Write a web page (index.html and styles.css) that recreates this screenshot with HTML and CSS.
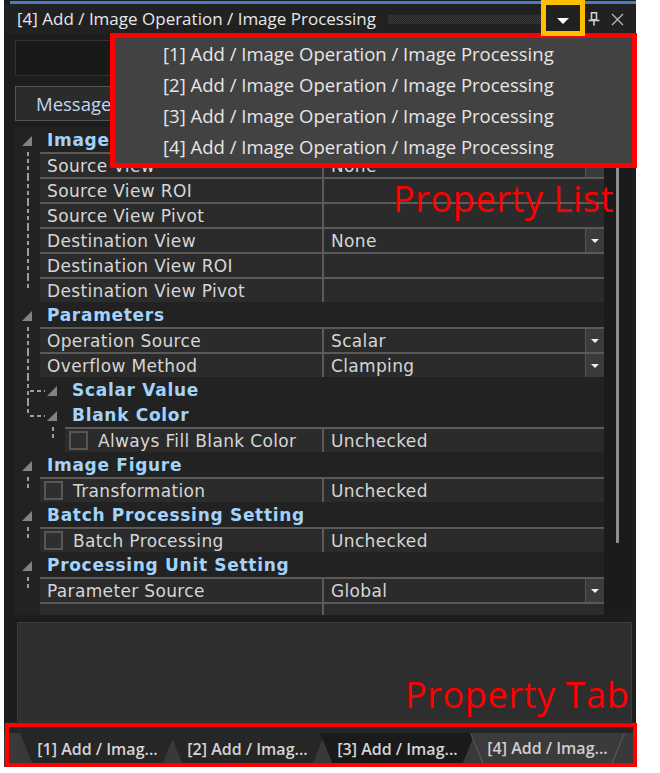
FILE: index.html
```html
<!DOCTYPE html>
<html>
<head>
<meta charset="utf-8">
<title>Property Window</title>
<link rel="stylesheet" href="styles.css">
</head>
<body>
<div class="screen">
  <div class="window">
    <div class="accent"></div>
    <div class="titlebar">
      <span class="title">[4] Add / Image Operation / Image Processing</span>
      <span class="grip"></span>
      <span class="tbtn ddbtn"><i class="wtri"></i></span>
      <span class="tbtn pin">
        <svg width="12" height="14" viewBox="0 0 12 14"><rect x="3.5" y="0.8" width="5" height="7" fill="none" stroke="#cfcfcf" stroke-width="1.6"/><line x1="0.5" y1="8.5" x2="11.5" y2="8.5" stroke="#cfcfcf" stroke-width="1.6"/><line x1="6" y1="8.5" x2="6" y2="13.5" stroke="#cfcfcf" stroke-width="1.6"/></svg>
      </span>
      <span class="tbtn close">
        <svg width="13" height="13" viewBox="0 0 13 13"><path d="M1 1 L12 12 M12 1 L1 12" stroke="#b4b4b4" stroke-width="1.4" fill="none"/></svg>
      </span>
    </div>
    <div class="content">
      <div class="search"></div>
      <div class="toolbar"><div class="msgbtn">Message</div></div>
      <div class="gridwrap">
        <div class="grid">
          <div class="row cat"><span class="gut"><i class="tri"></i></span><span class="clabel">Image View</span></div>
          <div class="row"><span class="gut line"></span><div class="cells"><span class="name">Source View</span><span class="val">None<i class="dd"></i></span></div></div>
          <div class="row"><span class="gut line"></span><div class="cells"><span class="name">Source View ROI</span><span class="val"></span></div></div>
          <div class="row"><span class="gut line"></span><div class="cells"><span class="name">Source View Pivot</span><span class="val"></span></div></div>
          <div class="row"><span class="gut line"></span><div class="cells"><span class="name">Destination View</span><span class="val">None<i class="dd"></i></span></div></div>
          <div class="row"><span class="gut line"></span><div class="cells"><span class="name">Destination View ROI</span><span class="val"></span></div></div>
          <div class="row"><span class="gut half"></span><div class="cells"><span class="name">Destination View Pivot</span><span class="val"></span></div></div>
          <div class="row cat"><span class="gut"><i class="tri"></i></span><span class="clabel">Parameters</span></div>
          <div class="row"><span class="gut line"></span><div class="cells"><span class="name">Operation Source</span><span class="val">Scalar<i class="dd"></i></span></div></div>
          <div class="row"><span class="gut line"></span><div class="cells"><span class="name">Overflow Method</span><span class="val">Clamping<i class="dd"></i></span></div></div>
          <div class="row cat"><span class="gut sub tee"></span><i class="tri subtri"></i><span class="slabel">Scalar Value</span></div>
          <div class="row cat"><span class="gut sub elbow"></span><i class="tri subtri"></i><span class="slabel">Blank Color</span></div>
          <div class="row"><span class="gut deep"></span><div class="cells"><span class="name"><i class="cb"></i>Always Fill Blank Color</span><span class="val">Unchecked</span></div></div>
          <div class="row cat"><span class="gut"><i class="tri"></i></span><span class="clabel">Image Figure</span></div>
          <div class="row"><span class="gut half"></span><div class="cells"><span class="name"><i class="cb"></i>Transformation</span><span class="val">Unchecked</span></div></div>
          <div class="row cat"><span class="gut"><i class="tri"></i></span><span class="clabel">Batch Processing Setting</span></div>
          <div class="row"><span class="gut half"></span><div class="cells"><span class="name"><i class="cb"></i>Batch Processing</span><span class="val">Unchecked</span></div></div>
          <div class="row cat"><span class="gut"><i class="tri"></i></span><span class="clabel">Processing Unit Setting</span></div>
          <div class="row"><span class="gut half"></span><div class="cells"><span class="name">Parameter Source</span><span class="val">Global<i class="dd"></i></span></div></div>
          <div class="row stub"><span class="gut"></span><div class="cells"><span class="name"></span><span class="val"></span></div></div>
        </div>
        <div class="scroll"><div class="thumb"></div></div>
      </div>
      <div class="desc"></div>
    </div>
    <div class="tabs">
      <div class="tab">[1] Add / Imag...</div>
      <div class="tab">[2] Add / Imag...</div>
      <div class="tab hover">[3] Add / Imag...</div>
      <div class="tab active"><div class="tab-in">[4] Add / Imag...</div></div>
    </div>
  </div>
</div>

<div class="menu">
  <div class="item">[1] Add / Image Operation / Image Processing</div>
  <div class="item">[2] Add / Image Operation / Image Processing</div>
  <div class="item">[3] Add / Image Operation / Image Processing</div>
  <div class="item">[4] Add / Image Operation / Image Processing</div>
</div>
<div class="hl-orange"></div>
<div class="hl-tabs"></div>
<div class="note note-list">Property List</div>
<div class="note note-tab">Property Tab</div>
</body>
</html>
```

FILE: styles.css
```css
* { box-sizing: border-box; margin: 0; padding: 0; }
html, body { width: 660px; height: 773px; background: #ffffff; overflow: hidden; }
body { position: relative; font-family: "DejaVu Sans", sans-serif; }

.screen { display: flex; height: 767px; padding-left: 4px; background: #ffffff; }
.window { width: 632px; height: 767px; display: flex; flex-direction: column; background: #1d1d1d; }

.accent { height: 3px; margin: 1px 0 0 6px; background: #4b7cc8; flex: none; }

.titlebar {
  flex: none; height: 30px; display: flex; align-items: center;
  padding: 0 4px 0 13px; background: #212121;
  font-family: "Open Sans", sans-serif; font-size: 17px; line-height: 30px; color: #e8e8e8;
}
.title { flex: none; white-space: nowrap; }
.grip {
  flex: 1; height: 9px; margin: 0 0 0 12px;
  background: conic-gradient(#3d3d3d 25%, transparent 0 50%, #3d3d3d 0 75%, transparent 0) 0 0 / 2px 2px;
}
.tbtn { flex: none; height: 30px; display: flex; align-items: center; justify-content: center; }
.ddbtn { width: 44px; }
.wtri { display: block; width: 0; height: 0; margin-top: 4px; border-style: solid; border-width: 6px 6px 0 6px; border-color: #ffffff transparent transparent transparent; }
.pin { width: 18px; }
.close { width: 29px; }

.content { flex: none; height: 688px; display: flex; flex-direction: column; padding: 6px 4px 0 11px; }
.search { flex: none; height: 36px; background: #191919; border: 1px solid #333333; }
.toolbar { flex: none; height: 35px; margin-top: 10px; display: flex; }
.msgbtn {
  width: 160px; height: 35px; border: 1px solid #555555; background: #2b2b2b;
  padding-left: 20px; font-family: "Open Sans", sans-serif; font-size: 18.5px; line-height: 33px; color: #c3d6ec;
}

.gridwrap { flex: none; height: 488px; margin-top: 6px; display: flex; overflow: hidden; }
.grid { width: 589px; flex: none; background: #222222; overflow: hidden; }
.scroll { flex: 1; background: #1b1b1b; }
.thumb { width: 3px; height: 408px; margin: 8px 0 0 12px; background: #8e8e8e; }

.row { display: flex; height: 25px; align-items: stretch; }
.row.stub { height: 13px; }
.cat { background: #222222; align-items: center; }
.gut { flex: none; width: 25px; display: flex; align-items: center; padding-left: 7px; }
.gut.line { background: repeating-linear-gradient(#9c9c9c 0 4px, transparent 4px 7px) 12px 0 / 2px 100% no-repeat; }
.gut.half { background: repeating-linear-gradient(#9c9c9c 0 4px, transparent 4px 7px) 12px 0 / 2px 13px no-repeat; }
.gut.deep { width: 50px; background: repeating-linear-gradient(#9c9c9c 0 4px, transparent 4px 7px) 37px 0 / 2px 13px no-repeat; }
.gut.sub { width: 32px; align-self: stretch; }
.gut.tee {
  background:
    repeating-linear-gradient(#9c9c9c 0 4px, transparent 4px 7px) 12px 0 / 2px 100% no-repeat,
    repeating-linear-gradient(90deg, #9c9c9c 0 4px, transparent 4px 7px) 15px 13px / 15px 2px no-repeat;
}
.gut.elbow {
  background:
    repeating-linear-gradient(#9c9c9c 0 4px, transparent 4px 7px) 12px 0 / 2px 14px no-repeat,
    repeating-linear-gradient(90deg, #9c9c9c 0 4px, transparent 4px 7px) 15px 13px / 15px 2px no-repeat;
}
.tri {
  display: block; flex: none; width: 0; height: 0; margin-top: 3px;
  border-style: solid; border-width: 0 0 10px 10px;
  border-color: transparent transparent #828282 transparent;
}
.subtri { margin-right: 15px; }
.clabel, .slabel {
  font-weight: bold; font-size: 17px; letter-spacing: 0.7px; color: #a2d3fb; white-space: nowrap;
}
.clabel { padding-left: 7px; }

.cells { flex: 1; display: flex; border-top: 2px solid #5a5a5a; background: #2b2b2b; min-width: 0; }
.name, .val {
  display: flex; align-items: center; white-space: nowrap; overflow: hidden;
  font-size: 17px; letter-spacing: 0.35px; color: #d6d6d6;
}
.name { flex: 1; padding-left: 7px; min-width: 0; }
.val { flex: none; width: 282px; border-left: 2px solid #5a5a5a; padding-left: 7px; }
.dd {
  margin-left: auto; width: 19px; height: 23px; flex: none;
  background: #3b3b3b; border-left: 1px solid #555555;
  display: flex; align-items: center; justify-content: center;
}
.dd::after {
  content: ""; width: 0; height: 0; border-style: solid; border-width: 4px 4px 0 4px;
  border-color: #f0f0f0 transparent transparent transparent;
}
.cb { flex: none; width: 19px; height: 19px; margin: 0 10px 0 -3px; border: 2px solid #575757; background: #2f2f2f; }

.desc { flex: none; height: 100px; margin: 7px 0 0 2px; background: #2e2e2e; border: 1px solid #3b3b3b; }

.tabs {
  flex: none; height: 45px; display: flex; align-items: flex-end;
  padding: 0 0 2px 16px; background: #393939; border-top: 11px solid #262626;
}
.tab {
  flex: none; width: 155px; height: 32px; margin-right: -5px;
  clip-path: polygon(0 0, 100% 0, calc(100% - 13px) 100%, 13px 100%);
  background: #262626; text-align: center;
  font-family: "Open Sans", sans-serif; font-weight: 600; font-size: 16px; line-height: 32px; color: #d4d4d4;
}
.tab.hover { background: #1a1a1a; }
.tab.active { background: #5a5a5a; padding: 0 1px 1px 1px; color: #cfcfcf; }
.tab-in {
  height: 100%; background: #3b3b3b; line-height: 31px;
  clip-path: polygon(0 0, 100% 0, calc(100% - 13px) 100%, 13px 100%);
}

.menu {
  position: absolute; left: 110px; top: 33px; width: 527px; height: 135px;
  border: 5px solid #ff0000; background: #424242; padding-left: 48px;
  font-family: "Open Sans", sans-serif; font-size: 18.5px; line-height: 31px; color: #e6e6e6;
}
.item { white-space: nowrap; }
.hl-orange { position: absolute; left: 541px; top: 0; width: 44px; height: 36px; border: 5px solid #ffbf00; }
.hl-tabs { position: absolute; left: 5px; top: 723px; width: 632px; height: 44px; border: 4px solid #ff0000; }
.note {
  position: absolute; font-family: "Open Sans", sans-serif; font-size: 36px; line-height: 40px;
  color: #ff0000; white-space: nowrap; letter-spacing: 0.6px;
}
.note-list { left: 393px; top: 179px; }
.note-tab { left: 405px; top: 675px; }
```
